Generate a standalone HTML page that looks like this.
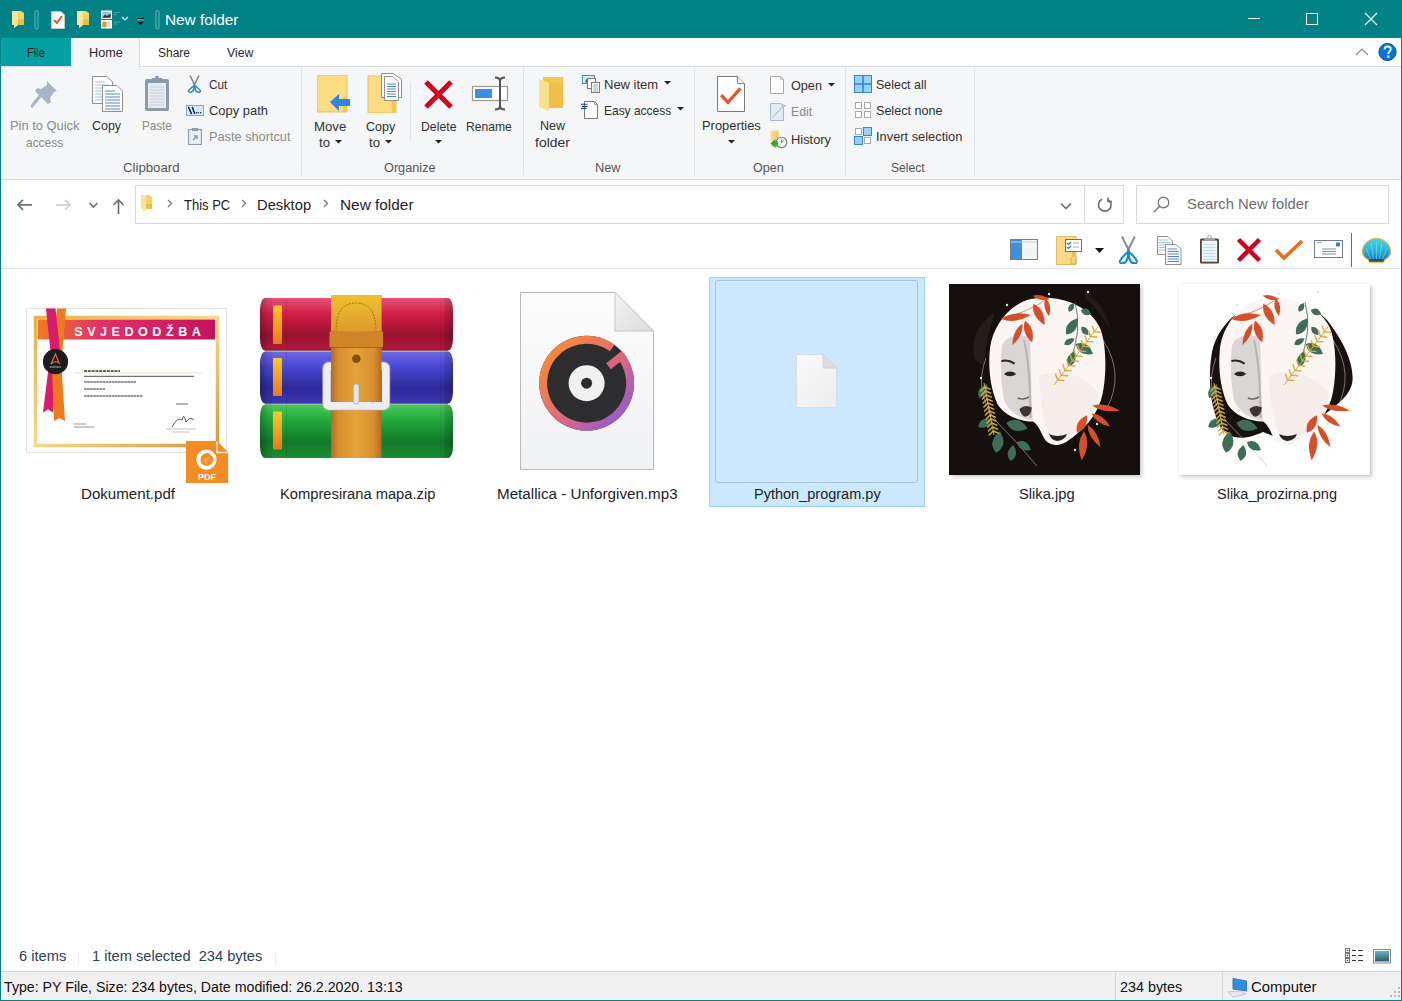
<!DOCTYPE html>
<html><head><meta charset="utf-8"><title>New folder</title>
<style>
html,body{margin:0;padding:0;}
body{width:1402px;height:1001px;position:relative;overflow:hidden;background:#fff;font-family:"Liberation Sans",sans-serif;}
.t{position:absolute;white-space:nowrap;line-height:1;}
svg{display:block;}
</style></head><body>
<div style="position:absolute;left:0px;top:0px;width:1402px;height:38px;background:#038286"></div>
<div style="position:absolute;left:0px;top:0px;width:1px;height:1001px;background:#038286"></div>
<div style="position:absolute;left:1401px;top:0px;width:1px;height:1001px;background:#038286"></div>
<div style="position:absolute;left:0px;top:1000px;width:1402px;height:1px;background:#038286"></div>
<svg style="position:absolute;left:12px;top:11px" width="13" height="17" viewBox="0 0 13 17"><path d="M0 0H9L12 2V14H6L2 17V14H0Z" fill="#f5d36a"/><path d="M0 0H6V14L2 17V14H0Z" fill="#fbe49a"/><path d="M6 8H12V14H6Z" fill="#eabf45"/></svg>
<svg style="position:absolute;left:34px;top:10px" width="5" height="20" viewBox="0 0 5 20"><rect x="1" y="0.5" width="3" height="18.5" rx="1.5" fill="none" stroke="#7cc4c8" stroke-width="0.8"/></svg>
<svg style="position:absolute;left:51px;top:11px" width="14" height="18" viewBox="0 0 14 18"><path d="M0.5 0.5H10L13.5 4V17.5H0.5Z" fill="#fff" stroke="#c8c8c8"/><path d="M3 9L6 12L11 5" stroke="#e05a28" stroke-width="2" fill="none"/></svg>
<svg style="position:absolute;left:77px;top:11px" width="13" height="18" viewBox="0 0 13 18"><path d="M0 0H9L12 2V14H6L2 17V14H0Z" fill="#f5d36a"/><path d="M0 0H6V14L2 17V14H0Z" fill="#fbe49a"/><path d="M6 8H12V14H6Z" fill="#eabf45"/></svg>
<svg style="position:absolute;left:100px;top:10px" width="22" height="20" viewBox="0 0 22 20"><rect x="1" y="0.5" width="11" height="8.5" fill="#fff"/><rect x="2.3" y="1.8" width="8.4" height="5.9" fill="#9cc0e0"/><path d="M2.3 7.7L5 4.5L7 6L10.7 3.5V7.7Z" fill="#2e3a40"/><rect x="1" y="10" width="11" height="8.5" fill="#fff"/><rect x="2.3" y="11.3" width="8.4" height="5.9" fill="#e8e0c8"/><rect x="2.3" y="11.8" width="4" height="5.4" fill="#c8a040"/><path d="M13.5 2.5H20M13.5 4.5H17M13.5 12H20M13.5 14H17" stroke="#5aa8ac" stroke-width="0.8"/></svg>
<svg style="position:absolute;left:121px;top:16px" width="8" height="6" viewBox="0 0 8 6"><path d="M1 1L4 4L7 1" stroke="#d8f4f6" fill="none" stroke-width="1.2"/></svg>
<svg style="position:absolute;left:136px;top:17px" width="9" height="9" viewBox="0 0 9 9"><rect x="1" y="1" width="7" height="1.4" fill="#111"/><path d="M1 2.6H8" stroke="#7fd0d4" stroke-width="0.8"/><path d="M1.5 5H7.5L4.5 8Z" fill="#111"/></svg>
<svg style="position:absolute;left:155px;top:10px" width="5" height="20" viewBox="0 0 5 20"><rect x="1" y="0.5" width="3" height="18.5" rx="1.5" fill="none" stroke="#7cc4c8" stroke-width="0.8"/></svg>
<div class="t" style="left:165.40px;top:12.72px;font-size:14.5px;color:#ffffff;transform:scaleX(1.0576);transform-origin:0 0;">New folder</div>
<div style="position:absolute;left:1248px;top:18px;width:12px;height:1px;background:#fff"></div>
<div style="position:absolute;left:1306px;top:13px;width:12px;height:12px;border:1px solid #fff;box-sizing:border-box"></div>
<svg style="position:absolute;left:1364px;top:12px" width="14" height="14" viewBox="0 0 14 14"><path d="M1 1L13 13M13 1L1 13" stroke="#fff" stroke-width="1.1"/></svg>
<div style="position:absolute;left:1px;top:38px;width:1400px;height:28px;background:#fff"></div>
<div style="position:absolute;left:1px;top:66px;width:1400px;height:1px;background:#dadbdc"></div>
<div style="position:absolute;left:1px;top:38px;width:70px;height:28px;background:#04a0a4"></div>
<div class="t" style="left:26.60px;top:46.64px;font-size:12px;color:#1a1a1a;transform:scaleX(0.9213);transform-origin:0 0;">File</div>
<div style="position:absolute;left:71px;top:38px;width:69px;height:29px;background:#f5f6f7;border-right:1px solid #dadbdc;box-sizing:border-box"></div>
<div class="t" style="left:88.60px;top:46.64px;font-size:12px;color:#2a2a2a;transform:scaleX(1.0549);transform-origin:0 0;">Home</div>
<div class="t" style="left:158.40px;top:46.64px;font-size:12px;color:#2a2a2a;transform:scaleX(0.9988);transform-origin:0 0;">Share</div>
<div class="t" style="left:226.60px;top:46.64px;font-size:12px;color:#2a2a2a;transform:scaleX(1.0233);transform-origin:0 0;">View</div>
<svg style="position:absolute;left:1355px;top:47px" width="14" height="9" viewBox="0 0 14 9"><path d="M1 8L7 2L13 8" stroke="#8a8a8a" fill="none" stroke-width="1.2"/></svg>
<svg style="position:absolute;left:1378px;top:42px" width="19" height="20" viewBox="0 0 19 20"><circle cx="9.5" cy="10" r="8.6" fill="#0a72d4" stroke="#0b4d92" stroke-width="1"/><path d="M6.6 7.4C6.6 5.4 8 4.4 9.7 4.4C11.5 4.4 12.8 5.5 12.8 7.1C12.8 9.4 10.2 9.6 10.2 12" stroke="#d8f2ff" stroke-width="2" fill="none"/><rect x="9" y="13.4" width="2.4" height="2.4" fill="#d8f2ff"/></svg>
<div style="position:absolute;left:1px;top:67px;width:1400px;height:112px;background:#f5f6f7"></div>
<div style="position:absolute;left:1px;top:179px;width:1400px;height:1px;background:#dadbdc"></div>
<div style="position:absolute;left:301px;top:68px;width:1px;height:107px;background:#e2e3e4"></div>
<div style="position:absolute;left:523px;top:68px;width:1px;height:107px;background:#e2e3e4"></div>
<div style="position:absolute;left:694px;top:68px;width:1px;height:107px;background:#e2e3e4"></div>
<div style="position:absolute;left:845px;top:68px;width:1px;height:107px;background:#e2e3e4"></div>
<div style="position:absolute;left:974px;top:68px;width:1px;height:107px;background:#e2e3e4"></div>
<div style="position:absolute;left:410px;top:82px;width:1px;height:58px;background:#e2e3e4"></div>
<div class="t" style="left:122.90px;top:161.93px;font-size:12.6px;color:#555;transform:scaleX(1.0477);transform-origin:0 0;">Clipboard</div>
<div class="t" style="left:384.40px;top:161.73px;font-size:12.6px;color:#555;transform:scaleX(1.0087);transform-origin:0 0;">Organize</div>
<div class="t" style="left:594.50px;top:161.73px;font-size:12.6px;color:#555;transform:scaleX(1.0094);transform-origin:0 0;">New</div>
<div class="t" style="left:752.80px;top:162.03px;font-size:12.6px;color:#555;transform:scaleX(0.9998);transform-origin:0 0;">Open</div>
<div class="t" style="left:891.40px;top:162.03px;font-size:12.6px;color:#555;transform:scaleX(0.9592);transform-origin:0 0;">Select</div>
<svg style="position:absolute;left:31px;top:80px" width="27" height="28" viewBox="0 0 27 28"><path d="M16 1L26 11L23 12L19 18L20 22L17 24L4 11L6 8L10 9L16 5Z" fill="#a8b3c3" transform="translate(0,0)"/><path d="M9 16L1 26" stroke="#a8b3c3" stroke-width="3" stroke-linecap="round"/></svg>
<div class="t" style="left:10.20px;top:120.13px;font-size:12.6px;color:#8a8a8a;transform:scaleX(1.0224);transform-origin:0 0;">Pin to Quick</div>
<div class="t" style="left:25.50px;top:136.83px;font-size:12.6px;color:#8a8a8a;transform:scaleX(0.9468);transform-origin:0 0;">access</div>
<svg style="position:absolute;left:92px;top:76px" width="31" height="36" viewBox="0 0 31 36"><path d="M0.5 0.5H15L20.5 6V27.5H0.5Z" fill="#fff" stroke="#8f8f8f"/><path d="M3 6H13M3 9H17M3 12H17M3 15H17M3 18H17M3 21H17M3 24H17" stroke="#9cc0e6"/><path d="M10.5 9.5H25L30.5 15V35.5H10.5Z" fill="#fff" stroke="#8f8f8f"/><path d="M13 15H23M13 18H28M13 21H28M13 24H28M13 27H28M13 30H28M13 33H28" stroke="#4a86d0"/></svg>
<div class="t" style="left:92.00px;top:120.13px;font-size:12.6px;color:#303030;transform:scaleX(0.9891);transform-origin:0 0;">Copy</div>
<svg style="position:absolute;left:144px;top:75px" width="26" height="37" viewBox="0 0 26 37"><rect x="1" y="4" width="24" height="32" rx="2" fill="#8d99ad"/><rect x="4" y="8" width="18" height="25" fill="#e6ebf3"/><path d="M6 12H20M6 15H20M6 18H20M6 21H20M6 24H20M6 27H20M6 30H20" stroke="#c5cedc"/><rect x="8" y="3" width="10" height="4" fill="#8d99ad"/><circle cx="13" cy="2.5" r="2" fill="#8d99ad"/></svg>
<div class="t" style="left:141.50px;top:119.83px;font-size:12.6px;color:#8a8a8a;transform:scaleX(0.9257);transform-origin:0 0;">Paste</div>
<svg style="position:absolute;left:187px;top:75px" width="15" height="18" viewBox="0 0 15 18"><path d="M3 0.5L8 10.5M12 0.5L7 10.5" stroke="#7d7d7d" stroke-width="1.5"/><path d="M7.5 10.5C5 12.5 1.2 14.8 1.6 16.3C2 17.6 4.6 17.6 5.9 16C6.9 14.8 7.5 12.5 7.5 10.5Z" fill="none" stroke="#2a8ad0" stroke-width="1.6"/><path d="M7.5 10.5C10 12.5 13.8 14.8 13.4 16.3C13 17.6 10.4 17.6 9.1 16C8.1 14.8 7.5 12.5 7.5 10.5Z" fill="none" stroke="#2a8ad0" stroke-width="1.6"/></svg>
<div class="t" style="left:208.50px;top:79.13px;font-size:12.6px;color:#303030;transform:scaleX(0.9289);transform-origin:0 0;">Cut</div>
<svg style="position:absolute;left:186px;top:105px" width="18" height="11" viewBox="0 0 18 11"><rect x="0.5" y="0.5" width="17" height="10" fill="#d3e9fb" stroke="#8ea4ba"/><path d="M2.6 2.4L5.4 8.6M6.4 2.4L8.6 8.4" stroke="#0e1c2c" stroke-width="1.4" stroke-linecap="round"/><circle cx="10.4" cy="7.8" r="0.7" fill="#0e1c2c"/><circle cx="12.4" cy="7.8" r="0.7" fill="#0e1c2c"/><circle cx="14.6" cy="7.8" r="0.7" fill="#0e1c2c"/></svg>
<div class="t" style="left:208.50px;top:104.93px;font-size:12.6px;color:#303030;transform:scaleX(1.0269);transform-origin:0 0;">Copy path</div>
<svg style="position:absolute;left:188px;top:127px" width="14" height="18" viewBox="0 0 14 18"><rect x="0.5" y="2.5" width="13" height="15" fill="#e8edf4" stroke="#8d99ad" stroke-width="1.2"/><rect x="4" y="1" width="6" height="3" fill="#8d99ad"/><path d="M5 13L9 9M6 9H9V12" stroke="#8d99ad" stroke-width="1.5" fill="none"/></svg>
<div class="t" style="left:208.50px;top:130.93px;font-size:12.6px;color:#8a8a8a;transform:scaleX(1.0122);transform-origin:0 0;">Paste shortcut</div>
<svg style="position:absolute;left:317px;top:75px" width="34" height="38" viewBox="0 0 34 38"><path d="M0 0H30V37H0Z" fill="#fbdc82"/><path d="M0 0H30V37H0Z" fill="none" stroke="#e8c25a" stroke-width="1"/><path d="M26 22V37H30V22Z" fill="#f0c850"/><path d="M13 27L22 19V24H33V31H22V36Z" fill="#2e87dc"/></svg>
<div class="t" style="left:314.40px;top:120.63px;font-size:12.6px;color:#303030;transform:scaleX(1.0485);transform-origin:0 0;">Move</div>
<div class="t" style="left:319.30px;top:137.03px;font-size:12.6px;color:#303030;transform:scaleX(1.0455);transform-origin:0 0;">to</div>
<svg style="position:absolute;left:334.5px;top:140.0px" width="7" height="4" viewBox="0 0 7 4"><path d="M0 0H7L3.5 3.5Z" fill="#222"/></svg>
<svg style="position:absolute;left:367px;top:73px" width="35" height="40" viewBox="0 0 35 40"><path d="M1 3H29V40H1Z" fill="#fbdc82" stroke="#e8c25a"/><path d="M25 24V40H29V24Z" fill="#f0c850"/><path d="M14.5 0.5H26L34.5 6V24.5H14.5Z" fill="#fff" stroke="#8f8f8f"/><path d="M17.5 3.5H26L31.5 9V27.5H17.5Z" fill="#fff" stroke="#8f8f8f"/><path d="M20 11H29M20 13.5H29M20 16H29M20 18.5H29M20 21H29M20 23.5H29" stroke="#4a86d0"/></svg>
<div class="t" style="left:365.60px;top:120.63px;font-size:12.6px;color:#303030;transform:scaleX(0.9925);transform-origin:0 0;">Copy</div>
<div class="t" style="left:369.20px;top:137.03px;font-size:12.6px;color:#303030;transform:scaleX(1.0550);transform-origin:0 0;">to</div>
<svg style="position:absolute;left:384.5px;top:140.0px" width="7" height="4" viewBox="0 0 7 4"><path d="M0 0H7L3.5 3.5Z" fill="#222"/></svg>
<svg style="position:absolute;left:423px;top:79px" width="31" height="31" viewBox="0 0 31 31"><path d="M3 3L28 28M28 3L3 28" stroke="#d6001c" stroke-width="5"/></svg>
<div class="t" style="left:420.50px;top:120.63px;font-size:12.6px;color:#303030;transform:scaleX(0.9749);transform-origin:0 0;">Delete</div>
<svg style="position:absolute;left:434.5px;top:140.0px" width="7" height="4" viewBox="0 0 7 4"><path d="M0 0H7L3.5 3.5Z" fill="#222"/></svg>
<svg style="position:absolute;left:471px;top:76px" width="38" height="35" viewBox="0 0 38 35"><rect x="1.5" y="10.5" width="35" height="14" fill="#fff" stroke="#9a9a9a" stroke-width="1.2"/><rect x="4" y="13" width="17" height="9" fill="#3a8fe0"/><path d="M24 1.5Q29 1.5 29 5V30Q29 33.5 24 33.5M34 1.5Q29 1.5 29 5V30Q29 33.5 34 33.5" stroke="#555" stroke-width="2" fill="none"/></svg>
<div class="t" style="left:466.40px;top:120.63px;font-size:12.6px;color:#303030;transform:scaleX(0.9637);transform-origin:0 0;">Rename</div>
<svg style="position:absolute;left:539px;top:77px" width="25" height="35" viewBox="0 0 25 35"><path d="M4 0H24V31H4Z" fill="#f2c84b"/><path d="M0 2L10 6V34L0 30Z" fill="#fbe08c"/><path d="M10 6H24V31H10Z" fill="#eec04a"/></svg>
<div class="t" style="left:539.60px;top:120.13px;font-size:12.6px;color:#303030;transform:scaleX(0.9935);transform-origin:0 0;">New</div>
<div class="t" style="left:535.00px;top:136.93px;font-size:12.6px;color:#303030;transform:scaleX(1.1079);transform-origin:0 0;">folder</div>
<svg style="position:absolute;left:581px;top:74px" width="20" height="20" viewBox="0 0 20 20"><rect x="1.5" y="1.5" width="12" height="8" fill="#d0ecf8" stroke="#5a8a90"/><path d="M4 8.5L5.5 4.5L7 8.5" fill="#3a5a60"/><rect x="6.5" y="4.5" width="8" height="10" fill="#fff" stroke="#777"/><rect x="10.5" y="8.5" width="8" height="10" fill="#fff" stroke="#8a7a7a"/><path d="M12 11H17M12 13H17M12 15H17M12 17H17" stroke="#9aa0b0" stroke-width="0.9"/></svg>
<div class="t" style="left:604.30px;top:78.73px;font-size:12.6px;color:#303030;transform:scaleX(1.0316);transform-origin:0 0;">New item</div>
<svg style="position:absolute;left:663.5px;top:81.0px" width="7" height="4" viewBox="0 0 7 4"><path d="M0 0H7L3.5 3.5Z" fill="#222"/></svg>
<svg style="position:absolute;left:580px;top:101px" width="19" height="19" viewBox="0 0 19 19"><path d="M4.5 0.5H14.5L17.5 3.5V17.5H4.5Z" fill="#fff" stroke="#777"/><path d="M14.5 0.5V3.5H17.5" fill="none" stroke="#999"/><path d="M1 3.3H7.5M2 5.4H7.5M1 7.4H6.5" stroke="#2c4a80" stroke-width="1.1"/></svg>
<div class="t" style="left:604.30px;top:104.83px;font-size:12.6px;color:#303030;transform:scaleX(0.9498);transform-origin:0 0;">Easy access</div>
<svg style="position:absolute;left:676.5px;top:107.0px" width="7" height="4" viewBox="0 0 7 4"><path d="M0 0H7L3.5 3.5Z" fill="#222"/></svg>
<svg style="position:absolute;left:717px;top:76px" width="28" height="36" viewBox="0 0 28 36"><path d="M0.5 0.5H20.5L27.5 7.5V35.5H0.5Z" fill="#fff" stroke="#7a7a7a"/><path d="M20.5 0.5V7.5H27.5" fill="#eef2f4" stroke="#8a8a8a"/><path d="M4.2 19.2L11 26.4L23.4 12.4" stroke="#e05a28" stroke-width="3.2" fill="none"/></svg>
<div class="t" style="left:701.50px;top:120.03px;font-size:12.6px;color:#303030;transform:scaleX(1.0234);transform-origin:0 0;">Properties</div>
<svg style="position:absolute;left:727.5px;top:140.0px" width="7" height="4" viewBox="0 0 7 4"><path d="M0 0H7L3.5 3.5Z" fill="#222"/></svg>
<svg style="position:absolute;left:769px;top:76px" width="16" height="18" viewBox="0 0 16 18"><path d="M1.5 0.5H11.5L14.5 3.5V17.5H1.5Z" fill="#fff" stroke="#a8a8a8"/><path d="M11.5 0.5V3.5H14.5" fill="none" stroke="#bbb"/></svg>
<div class="t" style="left:790.60px;top:79.73px;font-size:12.6px;color:#303030;transform:scaleX(1.0030);transform-origin:0 0;">Open</div>
<svg style="position:absolute;left:827.5px;top:83.0px" width="7" height="4" viewBox="0 0 7 4"><path d="M0 0H7L3.5 3.5Z" fill="#222"/></svg>
<svg style="position:absolute;left:769px;top:103px" width="18" height="18" viewBox="0 0 18 18"><path d="M1.5 0.5H11.5L14.5 3.5V17.5H1.5Z" fill="#e4ecf6" stroke="#a8b6c8"/><path d="M11.5 0.5L17 3L12 4" fill="none" stroke="#b8c4d4"/><path d="M3.5 14.5L14 3.5" stroke="#c0cad8" stroke-width="1.4"/></svg>
<div class="t" style="left:790.60px;top:106.43px;font-size:12.6px;color:#8a8a8a;transform:scaleX(0.9754);transform-origin:0 0;">Edit</div>
<svg style="position:absolute;left:770px;top:130px" width="18" height="19" viewBox="0 0 18 19"><defs><linearGradient id="hf" x1="0" x2="1"><stop offset="0" stop-color="#fce3a0"/><stop offset="1" stop-color="#f2c850"/></linearGradient></defs><path d="M0.5 0.5H8.5V17H0.5Z" fill="url(#hf)"/><circle cx="11.5" cy="12.5" r="5.3" fill="#f4f4f4" stroke="#808080" stroke-width="1.1"/><path d="M11.5 9.5V12.5L13.5 10.5" stroke="#555" stroke-width="0.8" fill="none"/><path d="M0.5 13.5L5.5 9V11.5H8V15.5H5.5V18Z" fill="#2aa838"/></svg>
<div class="t" style="left:790.60px;top:133.73px;font-size:12.6px;color:#303030;transform:scaleX(1.0208);transform-origin:0 0;">History</div>
<svg style="position:absolute;left:854px;top:75px" width="18" height="18" viewBox="0 0 18 18"><rect x="0.5" y="0.5" width="17" height="17" fill="#9cd0f7" stroke="#2f86d6"/><path d="M9 0V18M0 9H18" stroke="#2f86d6" stroke-width="1.6"/></svg>
<div class="t" style="left:876.30px;top:78.93px;font-size:12.6px;color:#303030;transform:scaleX(0.9872);transform-origin:0 0;">Select all</div>
<svg style="position:absolute;left:854px;top:102px" width="18" height="17" viewBox="0 0 18 17"><rect x="1.5" y="0.5" width="6" height="6" fill="#fff" stroke="#a8a8a8"/><rect x="10.5" y="0.5" width="6" height="6" fill="#fff" stroke="#a8a8a8"/><rect x="1.5" y="9.5" width="6" height="6" fill="#fff" stroke="#a8a8a8"/><rect x="10.5" y="9.5" width="6" height="6" fill="#fff" stroke="#a8a8a8"/></svg>
<div class="t" style="left:876.30px;top:105.03px;font-size:12.6px;color:#303030;transform:scaleX(0.9981);transform-origin:0 0;">Select none</div>
<svg style="position:absolute;left:854px;top:127px" width="18" height="18" viewBox="0 0 18 18"><rect x="1.5" y="1.5" width="6" height="6" fill="#fff" stroke="#a8a8a8"/><rect x="9.5" y="0.5" width="8" height="8" fill="#9cd0f7" stroke="#2f86d6"/><rect x="0.5" y="9.5" width="8" height="8" fill="#9cd0f7" stroke="#2f86d6"/><rect x="10.5" y="10.5" width="6" height="6" fill="#fff" stroke="#a8a8a8"/></svg>
<div class="t" style="left:876.30px;top:130.93px;font-size:12.6px;color:#303030;transform:scaleX(1.0196);transform-origin:0 0;">Invert selection</div>
<svg style="position:absolute;left:16px;top:198px" width="17" height="14" viewBox="0 0 17 14"><path d="M2 6.8H16M7 1.8L2 6.8L7 11.8" stroke="#707070" stroke-width="1.7" fill="none"/></svg>
<svg style="position:absolute;left:55px;top:198px" width="17" height="14" viewBox="0 0 17 14"><path d="M15 6.8H1M10 1.8L15 6.8L10 11.8" stroke="#d0d0d0" stroke-width="1.7" fill="none"/></svg>
<svg style="position:absolute;left:88px;top:201px" width="11" height="8" viewBox="0 0 11 8"><path d="M1.5 2L5.5 6L9.5 2" stroke="#707070" stroke-width="1.6" fill="none"/></svg>
<svg style="position:absolute;left:111px;top:197px" width="15" height="18" viewBox="0 0 15 18"><path d="M7.5 17V3M2.5 8L7.5 3L12.5 8" stroke="#707070" stroke-width="1.7" fill="none"/></svg>
<div style="position:absolute;left:135px;top:185px;width:989px;height:39px;border:1px solid #d9d9d9;box-sizing:border-box;background:#fff"></div>
<div style="position:absolute;left:1084px;top:186px;width:1px;height:37px;background:#d9d9d9"></div>
<svg style="position:absolute;left:141px;top:195px" width="12" height="17" viewBox="0 0 12 17"><path d="M0 0H8L11 1.5V14H5L2 17V14H0Z" fill="#f5d36a"/><path d="M0 0H5V14L2 17V14H0Z" fill="#fbe49a"/><path d="M5 9H11V14H5Z" fill="#eabf45"/></svg>
<svg style="position:absolute;left:167px;top:199px" width="6" height="9" viewBox="0 0 6 9"><path d="M1 1L4.5 4.5L1 8" stroke="#7a7a7a" stroke-width="1.3" fill="none"/></svg>
<svg style="position:absolute;left:241px;top:199px" width="6" height="9" viewBox="0 0 6 9"><path d="M1 1L4.5 4.5L1 8" stroke="#7a7a7a" stroke-width="1.3" fill="none"/></svg>
<svg style="position:absolute;left:323px;top:199px" width="6" height="9" viewBox="0 0 6 9"><path d="M1 1L4.5 4.5L1 8" stroke="#7a7a7a" stroke-width="1.3" fill="none"/></svg>
<div class="t" style="left:183.60px;top:197.00px;font-size:15px;color:#1e1e1e;transform:scaleX(0.8664);transform-origin:0 0;">This PC</div>
<div class="t" style="left:257.40px;top:197.00px;font-size:15px;color:#1e1e1e;transform:scaleX(0.9827);transform-origin:0 0;">Desktop</div>
<div class="t" style="left:339.60px;top:197.00px;font-size:15px;color:#1e1e1e;transform:scaleX(1.0251);transform-origin:0 0;">New folder</div>
<svg style="position:absolute;left:1060px;top:202px" width="12" height="8" viewBox="0 0 12 8"><path d="M1 1.5L6 6.5L11 1.5" stroke="#6e6e6e" stroke-width="1.6" fill="none"/></svg>
<svg style="position:absolute;left:1097px;top:197px" width="16" height="16" viewBox="0 0 16 16"><path d="M11.5 2.8A6.3 6.3 0 1 1 5 2.2" stroke="#6e6e6e" stroke-width="1.6" fill="none"/><path d="M11 0.5V4.5H15" stroke="#6e6e6e" stroke-width="1.6" fill="none"/></svg>
<div style="position:absolute;left:1136px;top:185px;width:253px;height:39px;border:1px solid #d9d9d9;box-sizing:border-box;background:#fff"></div>
<svg style="position:absolute;left:1153px;top:196px" width="17" height="17" viewBox="0 0 17 17"><circle cx="10.5" cy="6.5" r="5.3" stroke="#6e6e6e" stroke-width="1.2" fill="none"/><path d="M6.7 10.3L0.8 16.2" stroke="#6e6e6e" stroke-width="1.3"/></svg>
<div class="t" style="left:1186.80px;top:197.42px;font-size:14.5px;color:#6d6d6d;transform:scaleX(1.0213);transform-origin:0 0;">Search New folder</div>
<div style="position:absolute;left:1px;top:268px;width:1400px;height:1px;background:#e5e5e5"></div>
<svg style="position:absolute;left:1010px;top:239px" width="28" height="22" viewBox="0 0 28 22"><rect x="0.5" y="0.5" width="27" height="20" fill="#f4f4f4" stroke="#7d7d7d"/><rect x="1" y="1" width="11" height="19" fill="#3f8fe0"/><path d="M1 3H27" stroke="#cfcfcf"/></svg>
<svg style="position:absolute;left:1056px;top:236px" width="27" height="29" viewBox="0 0 27 29"><path d="M0.5 0.5H20V28.5H0.5Z" fill="#fcd98a" stroke="#e2bf60"/><rect x="9.5" y="3.5" width="16" height="12" fill="#fff" stroke="#6e6e6e"/><path d="M11 7L12.5 8.5L15 6M11 11L12.5 12.5L15 10" stroke="#2f7fd6" stroke-width="1.2" fill="none"/><path d="M17 7H23M17 11H23" stroke="#aaa"/><path d="M17 16V20L15 22V28H20V22L18 20V16" fill="#f3d27a" stroke="#d5b050"/></svg>
<svg style="position:absolute;left:1095px;top:248px" width="9" height="5" viewBox="0 0 9 5"><path d="M0 0H9L4.5 5Z" fill="#111"/></svg>
<svg style="position:absolute;left:1118px;top:236px" width="21" height="28" viewBox="0 0 21 28"><path d="M4 0.5L11.2 15M16.8 0.5L9.6 15" stroke="#8c8c8c" stroke-width="2"/><path d="M10.4 15.5C7 18.5 1.5 23 2 26C2.5 28 6 28 8 25.5C9.5 23.5 10.4 19 10.4 15.5Z" fill="none" stroke="#1d87cf" stroke-width="2.2"/><path d="M10.4 15.5C13.8 18.5 19.3 23 18.8 26C18.3 28 14.8 28 12.8 25.5C11.3 23.5 10.4 19 10.4 15.5Z" fill="none" stroke="#1d87cf" stroke-width="2.2"/></svg>
<svg style="position:absolute;left:1157px;top:236px" width="25" height="29" viewBox="0 0 25 29"><path d="M0.5 0.5H11L15.5 5V18.5H0.5Z" fill="#fff" stroke="#8f8f8f"/><path d="M2 4H11M2 6.5H13M2 9H13M2 11.5H13M2 14H13" stroke="#9cc0e6"/><path d="M8.5 8.5H19L24 13V28.5H8.5Z" fill="#fff" stroke="#8f8f8f"/><path d="M10.5 13H20M10.5 15.5H22M10.5 18H22M10.5 20.5H22M10.5 23H22M10.5 25.5H22" stroke="#4a86d0"/></svg>
<svg style="position:absolute;left:1199px;top:235px" width="21" height="29" viewBox="0 0 21 29"><rect x="1" y="3.5" width="19" height="25" rx="1.5" fill="#5c4127"/><rect x="2.8" y="5.5" width="15.4" height="21.2" fill="#eaf4fb"/><path d="M4.5 9.5H16.5M4.5 12.5H16.5M4.5 15.5H16.5M4.5 18.5H16.5M4.5 21.5H16.5M4.5 24.5H16.5" stroke="#bcd3e6" stroke-width="0.8"/><rect x="5" y="3" width="11" height="2.5" rx="1" fill="#a0a0a0"/><circle cx="10.5" cy="2" r="1.8" fill="none" stroke="#a0a0a0" stroke-width="1"/></svg>
<svg style="position:absolute;left:1236px;top:237px" width="26" height="26" viewBox="0 0 26 26"><path d="M2.5 2.5L23.5 23.5M23.5 2.5L2.5 23.5" stroke="#d0021b" stroke-width="4.5"/></svg>
<svg style="position:absolute;left:1274px;top:239px" width="30" height="22" viewBox="0 0 30 22"><path d="M2 11L10 19L28 2" stroke="#f26a1b" stroke-width="3.5" fill="none"/></svg>
<svg style="position:absolute;left:1314px;top:240px" width="29" height="18" viewBox="0 0 29 18"><rect x="0.5" y="0.5" width="28" height="17" fill="#fff" stroke="#6f7f8f"/><rect x="22" y="2.5" width="4" height="4" fill="#3a82d0"/><path d="M8 9H22M8 11.5H22M8 14H22" stroke="#7f8fa0"/><path d="M2.5 2.5H8" stroke="#aaa"/></svg>
<div style="position:absolute;left:1351px;top:233px;width:1px;height:34px;background:#6a6a6a"></div>
<svg style="position:absolute;left:1361px;top:237px" width="31" height="27" viewBox="0 0 31 27"><defs><linearGradient id="sh" x1="0" y1="0" x2="0" y2="1"><stop offset="0" stop-color="#48d6e4"/><stop offset="0.55" stop-color="#2aaed8"/><stop offset="1" stop-color="#1668b0"/></linearGradient></defs><path d="M15.5 1.5C7.5 1.5 1.5 8 1.5 14.5C1.5 18.5 4 21 7 22.5L8.5 25H22.5L24 22.5C27 21 29.5 18.5 29.5 14.5C29.5 8 23.5 1.5 15.5 1.5Z" fill="url(#sh)" stroke="#f0a848" stroke-width="1.2"/><path d="M15.5 5V22M10 6L12.5 22M21 6L18.5 22M5 11L9.5 22M26 11L21.5 22" stroke="#7ae8f0" stroke-width="0.9" opacity="0.6"/><rect x="8.5" y="22" width="14" height="3" fill="#0d5a80"/><path d="M8.5 25.5H22.5" stroke="#f6c040" stroke-width="1.5"/></svg>
<div style="position:absolute;left:709px;top:277px;width:216px;height:230px;background:#cce8ff;border:1px solid #99d1ff;box-sizing:border-box"></div>
<div style="position:absolute;left:715px;top:280px;width:203px;height:203px;border:1px solid #a9c3d9;border-radius:3px;box-sizing:border-box"></div>
<div class="t" style="left:80.50px;top:485.93px;font-size:15.2px;color:#1e1e1e;transform:scaleX(0.9948);transform-origin:0 0;">Dokument.pdf</div>
<div class="t" style="left:279.70px;top:485.93px;font-size:15.2px;color:#1e1e1e;transform:scaleX(0.9688);transform-origin:0 0;">Kompresirana mapa.zip</div>
<div class="t" style="left:497.00px;top:485.93px;font-size:15.2px;color:#1e1e1e;transform:scaleX(1.0000);transform-origin:0 0;">Metallica - Unforgiven.mp3</div>
<div class="t" style="left:753.80px;top:485.93px;font-size:15.2px;color:#1e1e1e;transform:scaleX(0.9554);transform-origin:0 0;">Python_program.py</div>
<div class="t" style="left:1019.10px;top:485.93px;font-size:15.2px;color:#1e1e1e;transform:scaleX(0.9677);transform-origin:0 0;">Slika.jpg</div>
<div class="t" style="left:1217.40px;top:485.93px;font-size:15.2px;color:#1e1e1e;transform:scaleX(0.9537);transform-origin:0 0;">Slika_prozirna.png</div>
<svg style="position:absolute;left:796px;top:354px" width="41" height="54" viewBox="0 0 41 54"><defs><linearGradient id="pg" x1="0" y1="0" x2="1" y2="1"><stop offset="0" stop-color="#fbfbfb"/><stop offset="1" stop-color="#ececec"/></linearGradient></defs><path d="M0.5 0.5H27L40.5 14V53.5H0.5Z" fill="url(#pg)" stroke="#d6dde4"/><path d="M27 0.5V14H40.5Z" fill="#dedede" stroke="#cfd5da"/></svg>
<svg style="position:absolute;left:520px;top:292px" width="134" height="178" viewBox="0 0 134 178"><defs><linearGradient id="mg" x1="0" y1="0" x2="0" y2="1"><stop offset="0" stop-color="#fcfcfc"/><stop offset="1" stop-color="#f1f2f4"/></linearGradient><linearGradient id="rg" x1="0" y1="0" x2="1" y2="1"><stop offset="0.1" stop-color="#f68a36"/><stop offset="0.55" stop-color="#dc6a7e"/><stop offset="0.95" stop-color="#8d59d4"/></linearGradient><linearGradient id="fg" x1="0" y1="0" x2="1" y2="1"><stop offset="0" stop-color="#f4f4f4"/><stop offset="1" stop-color="#dcdcdc"/></linearGradient></defs><path d="M0.5 0.5H95L133.5 39V177.5H0.5Z" fill="url(#mg)" stroke="#b9b9b9"/><path d="M95 0.5V39H133.5Z" fill="url(#fg)" stroke="#c5c5c5"/><circle cx="66.6" cy="91.2" r="47.4" fill="#2d2d2f"/><path d="M100.9 64.4A43.5 43.5 0 1 1 92.2 56.0" stroke="url(#rg)" stroke-width="8" fill="none"/><path d="M88.5 74.2L104.3 61.8" stroke="#d9677c" stroke-width="7.5"/><circle cx="66.6" cy="91.2" r="18" fill="#f0f0f0"/><circle cx="66.6" cy="91.2" r="5.5" fill="#2b2b2b"/></svg>
<svg style="position:absolute;left:26px;top:308px" width="201" height="145" viewBox="0 0 201 145">
<defs>
<linearGradient id="band" x1="0" x2="1"><stop offset="0" stop-color="#f07a22"/><stop offset="0.35" stop-color="#e2306a"/><stop offset="1" stop-color="#c4135e"/></linearGradient>
<linearGradient id="gold" x1="0" y1="0" x2="1" y2="1"><stop offset="0" stop-color="#e9b24a"/><stop offset="0.5" stop-color="#f6d98a"/><stop offset="1" stop-color="#d49a3a"/></linearGradient>
</defs>
<rect x="0.5" y="0.5" width="200" height="144" fill="#fff" stroke="#e3e3e3"/>
<rect x="9.5" y="9.5" width="182" height="128" fill="none" stroke="url(#gold)" stroke-width="3.5"/>
<rect x="12" y="11.5" width="177" height="20" fill="url(#band)"/>
<text x="113.8" y="28" font-family="Liberation Sans" font-weight="bold" font-size="12.6" fill="#fff" text-anchor="middle" letter-spacing="4.5">SVJEDODŽBA</text>
<path d="M31 0.5H40L36 48H27Z" fill="#ee7a1c"/>
<path d="M20 0.5H29.5L34.5 48H25Z" fill="#d81b6a"/>
<path d="M22.5 60H30L27 104.5L22 101.5L17 104.5Z" fill="#d81b6a"/>
<path d="M26 60H35.5L39 113L33.5 110L28 113Z" fill="#ee7a1c"/>

<circle cx="29.5" cy="53.7" r="12.6" fill="#1d1d1d"/>
<path d="M25 56L29.5 46L33 55Q29 52 25 56Z" fill="none" stroke="#e86a4a" stroke-width="1.1"/><path d="M24 59H35" stroke="#ddd" stroke-width="1.2" stroke-dasharray="1 0.4"/>
<path d="M58 63H94" stroke="#333" stroke-width="1.5" stroke-dasharray="3 0.8"/>
<path d="M48 65H176" stroke="#eee2c0" stroke-width="1"/>
<path d="M58 68.3H168" stroke="#222" stroke-width="0.8"/>
<path d="M58 74H110M58 81H79M58 88H117" stroke="#2a2a2a" stroke-width="1.1" stroke-dasharray="2.6 0.5"/>
<path d="M150 96H162" stroke="#555" stroke-width="0.9"/>
<path d="M48 116H60M48 119H68" stroke="#888" stroke-width="0.9"/>
<path d="M146 119Q152 108 156 112Q158 104 160 114Q164 108 168 112" stroke="#445" stroke-width="0.9" fill="none"/>
<path d="M140 121H170M146 124H164" stroke="#aaa" stroke-width="0.7"/>
</svg>
<svg style="position:absolute;left:186px;top:441px" width="42" height="42" viewBox="0 0 42 42">
<path d="M0 0H31L42 11V42H0Z" fill="#f68b22"/>
<path d="M31 0.5V11.5H41.5" fill="none" stroke="#fff4e6" stroke-width="1.4"/>
<circle cx="20.4" cy="18.6" r="10.2" fill="#fff"/>
<path d="M14.5 19.5C14.5 14 19 11 24 12.5C27 13.5 28 16 27.5 19C26.5 23.5 22.5 25.5 18.5 24.5C16 23.5 14.5 22 14.5 19.5Z" fill="#f68b22"/>
<path d="M22 13C26 14 29 17 28 22L30 14Z" fill="#fff"/>
<path d="M17 20Q20 15 24 16Q21 18 20 23Z" fill="#fbb36a"/>
<text x="21" y="38.8" font-family="Liberation Sans" font-weight="bold" font-size="9" fill="#fff" text-anchor="middle">PDF</text>
</svg>
<svg style="position:absolute;left:260px;top:295px" width="193" height="163" viewBox="0 0 193 163">
<defs>
<linearGradient id="rr" x1="0" y1="0" x2="0" y2="1"><stop offset="0" stop-color="#e4527a"/><stop offset="0.3" stop-color="#d41e48"/><stop offset="0.7" stop-color="#9c1232"/><stop offset="1" stop-color="#b4183c"/></linearGradient>
<linearGradient id="bb" x1="0" y1="0" x2="0" y2="1"><stop offset="0" stop-color="#6c6ae4"/><stop offset="0.3" stop-color="#4a46d2"/><stop offset="0.7" stop-color="#2e2a9a"/><stop offset="1" stop-color="#3a36b0"/></linearGradient>
<linearGradient id="gg" x1="0" y1="0" x2="0" y2="1"><stop offset="0" stop-color="#4cca5c"/><stop offset="0.3" stop-color="#22a83c"/><stop offset="0.7" stop-color="#127a2a"/><stop offset="1" stop-color="#1a8c32"/></linearGradient>
<linearGradient id="tab" x1="0" y1="0" x2="0" y2="1"><stop offset="0" stop-color="#fac828"/><stop offset="1" stop-color="#e87a1a"/></linearGradient>
<linearGradient id="belt" x1="0" x2="1"><stop offset="0" stop-color="#b66a20"/><stop offset="0.15" stop-color="#d88f30"/><stop offset="0.5" stop-color="#e4a238"/><stop offset="0.85" stop-color="#d88f30"/><stop offset="1" stop-color="#b66a20"/></linearGradient>
<linearGradient id="beltTop" x1="0" y1="0" x2="0" y2="1"><stop offset="0" stop-color="#f0c030"/><stop offset="1" stop-color="#dc9a2c"/></linearGradient>
<linearGradient id="edge" x1="0" x2="1"><stop offset="0" stop-color="#000" stop-opacity="0.25"/><stop offset="0.06" stop-color="#000" stop-opacity="0"/><stop offset="0.94" stop-color="#000" stop-opacity="0"/><stop offset="1" stop-color="#000" stop-opacity="0.25"/></linearGradient>
</defs>
<rect x="0" y="3" width="193" height="52.5" rx="5" ry="12" fill="url(#rr)"/>
<rect x="0" y="56.5" width="193" height="52" rx="5" ry="12" fill="url(#bb)"/>
<rect x="0" y="109.5" width="193" height="53.5" rx="5" ry="12" fill="url(#gg)"/>
<rect x="0" y="3" width="193" height="52.5" rx="5" ry="12" fill="url(#edge)"/><rect x="0" y="56.5" width="193" height="52" rx="5" ry="12" fill="url(#edge)"/><rect x="0" y="109.5" width="193" height="53.5" rx="5" ry="12" fill="url(#edge)"/><path d="M11 4V162M26.5 4V162M181 4V162M186 4V162" stroke="#000" stroke-opacity="0.12" stroke-width="0.8"/><path d="M5 55.5H188M5 108.8H188" stroke="#000" stroke-opacity="0.3" stroke-width="1.4"/>
<rect x="13" y="10.5" width="9" height="38.5" rx="1" fill="url(#tab)"/>
<rect x="13" y="63" width="9" height="38" rx="1" fill="url(#tab)"/>
<rect x="13" y="116.5" width="9" height="38" rx="1" fill="url(#tab)"/>
<rect x="71" y="0" width="50.5" height="163" fill="url(#belt)"/>
<path d="M71 0H121.5V36H71Z" fill="url(#beltTop)"/>
<path d="M76 36Q76 8 96 8Q116 8 116 36" fill="none" stroke="#b07018" stroke-width="1" stroke-dasharray="2 1.2"/>
<rect x="69.5" y="36.5" width="53.5" height="16" fill="#d08428"/>
<path d="M69.5 52.5H123" stroke="#9a5a18" stroke-width="0.8"/>
<rect x="66.8" y="71" width="59" height="40" rx="2.5" fill="none" stroke="#eeeef2" stroke-width="8"/>
<rect x="62.8" y="67" width="67" height="48" rx="5" fill="none" stroke="#b8b8c2" stroke-width="0.7"/>
<path d="M71 53H121.5V100Q121.5 104 117.5 104H75Q71 104 71 100Z" fill="url(#belt)"/>
<circle cx="96.3" cy="63.8" r="4.3" fill="#8a4a14"/>
<rect x="93.3" y="89" width="5.7" height="20" rx="2.5" fill="#e4e4ea" stroke="#9a9aa4" stroke-width="0.6"/>
</svg>
<div style="position:absolute;left:949px;top:284px;width:191px;height:191px;background:#150f0d;box-shadow:2px 2px 4px rgba(0,0,0,0.2)"></div>
<svg style="position:absolute;left:949px;top:284px" width="191" height="191" viewBox="20 20 955 955"><path d="M150 400Q110 260 250 160Q200 300 195 430Z" fill="#2b2320" opacity="0.7"/><path d="M700 60Q800 120 830 260Q790 170 700 90Z" fill="#2b2320" opacity="0.6"/><path d="M205 390Q140 560 260 710Q360 810 460 930" stroke="#bdb6b2" stroke-width="3" fill="none"/><path d="M790 300Q900 470 810 640" stroke="#bdb6b2" stroke-width="3" fill="none"/><path d="M430 95C560 70 720 120 775 240C815 340 805 520 780 600C750 690 690 750 620 800C580 830 540 835 505 805C480 770 470 725 440 708C370 705 300 680 262 620C225 540 215 430 225 340C240 230 320 120 430 95Z" fill="#fbf6f4"/><path d="M470 480C560 440 690 460 770 570C740 690 650 780 570 815C515 790 480 700 470 480Z" fill="#eed9d5" opacity="0.35"/><path d="M285 330C300 280 360 270 425 285L432 520C430 600 435 660 440 700C380 700 320 660 295 600C280 520 275 420 285 330Z" fill="#d9d6d5"/><path d="M395 300Q425 420 428 690" stroke="#8d8987" stroke-width="10" fill="none" opacity="0.45"/><path d="M282 405Q315 395 348 418" stroke="#2b2422" stroke-width="10" fill="none"/><path d="M294 470Q325 446 357 470Q325 492 294 470Z" fill="#2a2321"/><path d="M364 590Q390 602 420 585" stroke="#6a6462" stroke-width="8" fill="none"/><path d="M372 645Q400 620 434 638Q430 682 400 684Q380 676 372 645Z" fill="#3e3533"/><path d="M520 770Q560 790 610 770Q600 800 560 805Q530 800 520 770Z" fill="#2a2220"/><path d="M-75.0 0Q-11.25 -35.0 75.0 0Q-11.25 35.0 -75.0 0Z" transform="translate(355 185) rotate(-8)" fill="#d5502a"/><path d="M-60.0 0Q-9.0 -30.0 60.0 0Q-9.0 30.0 -60.0 0Z" transform="translate(362 272) rotate(115)" fill="#d5502a"/><path d="M-57.5 0Q-8.625 -38.0 57.5 0Q-8.625 38.0 -57.5 0Z" transform="translate(418 258) rotate(72)" fill="#d5502a"/><path d="M-60.0 0Q-9.0 -40.0 60.0 0Q-9.0 40.0 -60.0 0Z" transform="translate(470 172) rotate(62)" fill="#d5502a"/><path d="M-45.0 0Q-6.75 -28.0 45.0 0Q-6.75 28.0 -45.0 0Z" transform="translate(512 137) rotate(80)" fill="#d5502a"/><path d="M-42.5 0Q-6.375 -22.0 42.5 0Q-6.375 22.0 -42.5 0Z" transform="translate(480 88) rotate(12)" fill="#d5502a"/><path d="M-70.0 0Q-10.5 -30.0 70.0 0Q-10.5 30.0 -70.0 0Z" transform="translate(805 640) rotate(10)" fill="#d5502a"/><path d="M-57.5 0Q-8.625 -30.0 57.5 0Q-8.625 30.0 -57.5 0Z" transform="translate(780 700) rotate(35)" fill="#d5502a"/><path d="M-50.0 0Q-7.5 -40.0 50.0 0Q-7.5 40.0 -50.0 0Z" transform="translate(685 720) rotate(-60)" fill="#d5502a"/><path d="M-72.5 0Q-10.875 -40.0 72.5 0Q-10.875 40.0 -72.5 0Z" transform="translate(690 830) rotate(95)" fill="#d5502a"/><path d="M-65.0 0Q-9.75 -30.0 65.0 0Q-9.75 30.0 -65.0 0Z" transform="translate(745 780) rotate(60)" fill="#d5502a"/><path d="M280 190Q400 170 520 90" stroke="#c8462a" stroke-width="3" fill="none"/><path d="M650 110Q690 250 620 420" stroke="#3a6650" stroke-width="4" fill="none"/><path d="M-25.0 0Q-3.75 -28.0 25.0 0Q-3.75 28.0 -25.0 0Z" transform="translate(632 137) rotate(-60)" fill="#3f6e58"/><path d="M-27.5 0Q-4.125 -32.0 27.5 0Q-4.125 32.0 -27.5 0Z" transform="translate(705 160) rotate(20)" fill="#3f6e58"/><path d="M-50.0 0Q-7.5 -45.0 50.0 0Q-7.5 45.0 -50.0 0Z" transform="translate(635 232) rotate(-55)" fill="#3f6e58"/><path d="M-27.5 0Q-4.125 -30.0 27.5 0Q-4.125 30.0 -27.5 0Z" transform="translate(700 255) rotate(50)" fill="#3f6e58"/><path d="M-30.0 0Q-4.5 -30.0 30.0 0Q-4.5 30.0 -30.0 0Z" transform="translate(622 308) rotate(-30)" fill="#3f6e58"/><path d="M-50.0 0Q-7.5 -48.0 50.0 0Q-7.5 48.0 -50.0 0Z" transform="translate(697 345) rotate(30)" fill="#3f6e58"/><path d="M-40.0 0Q-6.0 -40.0 40.0 0Q-6.0 40.0 -40.0 0Z" transform="translate(632 395) rotate(-70)" fill="#3f6e58"/><path d="M-40.0 0Q-6.0 -40.0 40.0 0Q-6.0 40.0 -40.0 0Z" transform="translate(190 555) rotate(-60)" fill="#3f6e58"/><path d="M-40.0 0Q-6.0 -40.0 40.0 0Q-6.0 40.0 -40.0 0Z" transform="translate(200 715) rotate(-30)" fill="#3f6e58"/><path d="M-55.0 0Q-8.25 -55.0 55.0 0Q-8.25 55.0 -55.0 0Z" transform="translate(360 728) rotate(15)" fill="#3f6e58"/><path d="M-55.0 0Q-8.25 -55.0 55.0 0Q-8.25 55.0 -55.0 0Z" transform="translate(265 810) rotate(-80)" fill="#3f6e58"/><path d="M-40.0 0Q-6.0 -42.0 40.0 0Q-6.0 42.0 -40.0 0Z" transform="translate(335 865) rotate(-80)" fill="#3f6e58"/><path d="M-40.0 0Q-6.0 -42.0 40.0 0Q-6.0 42.0 -40.0 0Z" transform="translate(395 830) rotate(30)" fill="#3f6e58"/><path d="M545 525L765 235" stroke="#d6ac3e" stroke-width="5"/><path d="M563.3 500.8L593.6 502.7" stroke="#d6ac3e" stroke-width="7" stroke-linecap="round"/><path d="M563.3 500.8L553.4 472.2" stroke="#d6ac3e" stroke-width="7" stroke-linecap="round"/><path d="M581.7 476.7L611.9 478.5" stroke="#d6ac3e" stroke-width="7" stroke-linecap="round"/><path d="M581.7 476.7L571.7 448.1" stroke="#d6ac3e" stroke-width="7" stroke-linecap="round"/><path d="M600.0 452.5L630.2 454.3" stroke="#d6ac3e" stroke-width="7" stroke-linecap="round"/><path d="M600.0 452.5L590.1 423.9" stroke="#d6ac3e" stroke-width="7" stroke-linecap="round"/><path d="M618.3 428.3L648.6 430.2" stroke="#d6ac3e" stroke-width="7" stroke-linecap="round"/><path d="M618.3 428.3L608.4 399.7" stroke="#d6ac3e" stroke-width="7" stroke-linecap="round"/><path d="M636.7 404.2L666.9 406.0" stroke="#d6ac3e" stroke-width="7" stroke-linecap="round"/><path d="M636.7 404.2L626.7 375.6" stroke="#d6ac3e" stroke-width="7" stroke-linecap="round"/><path d="M655.0 380.0L685.2 381.8" stroke="#d6ac3e" stroke-width="7" stroke-linecap="round"/><path d="M655.0 380.0L645.1 351.4" stroke="#d6ac3e" stroke-width="7" stroke-linecap="round"/><path d="M673.3 355.8L703.6 357.7" stroke="#d6ac3e" stroke-width="7" stroke-linecap="round"/><path d="M673.3 355.8L663.4 327.2" stroke="#d6ac3e" stroke-width="7" stroke-linecap="round"/><path d="M691.7 331.7L721.9 333.5" stroke="#d6ac3e" stroke-width="7" stroke-linecap="round"/><path d="M691.7 331.7L681.7 303.1" stroke="#d6ac3e" stroke-width="7" stroke-linecap="round"/><path d="M710.0 307.5L740.2 309.3" stroke="#d6ac3e" stroke-width="7" stroke-linecap="round"/><path d="M710.0 307.5L700.1 278.9" stroke="#d6ac3e" stroke-width="7" stroke-linecap="round"/><path d="M728.3 283.3L758.6 285.2" stroke="#d6ac3e" stroke-width="7" stroke-linecap="round"/><path d="M728.3 283.3L718.4 254.7" stroke="#d6ac3e" stroke-width="7" stroke-linecap="round"/><path d="M746.7 259.2L776.9 261.0" stroke="#d6ac3e" stroke-width="7" stroke-linecap="round"/><path d="M746.7 259.2L736.7 230.6" stroke="#d6ac3e" stroke-width="7" stroke-linecap="round"/><path d="M195 515L245 775" stroke="#d6ac3e" stroke-width="5"/><path d="M198.8 535.0L178.8 554.7" stroke="#d6ac3e" stroke-width="7" stroke-linecap="round"/><path d="M198.8 535.0L224.8 545.9" stroke="#d6ac3e" stroke-width="7" stroke-linecap="round"/><path d="M202.7 555.0L182.7 574.7" stroke="#d6ac3e" stroke-width="7" stroke-linecap="round"/><path d="M202.7 555.0L228.6 565.9" stroke="#d6ac3e" stroke-width="7" stroke-linecap="round"/><path d="M206.5 575.0L186.5 594.7" stroke="#d6ac3e" stroke-width="7" stroke-linecap="round"/><path d="M206.5 575.0L232.5 585.9" stroke="#d6ac3e" stroke-width="7" stroke-linecap="round"/><path d="M210.4 595.0L190.4 614.7" stroke="#d6ac3e" stroke-width="7" stroke-linecap="round"/><path d="M210.4 595.0L236.3 605.9" stroke="#d6ac3e" stroke-width="7" stroke-linecap="round"/><path d="M214.2 615.0L194.2 634.7" stroke="#d6ac3e" stroke-width="7" stroke-linecap="round"/><path d="M214.2 615.0L240.2 625.9" stroke="#d6ac3e" stroke-width="7" stroke-linecap="round"/><path d="M218.1 635.0L198.0 654.7" stroke="#d6ac3e" stroke-width="7" stroke-linecap="round"/><path d="M218.1 635.0L244.0 645.9" stroke="#d6ac3e" stroke-width="7" stroke-linecap="round"/><path d="M221.9 655.0L201.9 674.7" stroke="#d6ac3e" stroke-width="7" stroke-linecap="round"/><path d="M221.9 655.0L247.8 665.9" stroke="#d6ac3e" stroke-width="7" stroke-linecap="round"/><path d="M225.8 675.0L205.7 694.7" stroke="#d6ac3e" stroke-width="7" stroke-linecap="round"/><path d="M225.8 675.0L251.7 685.9" stroke="#d6ac3e" stroke-width="7" stroke-linecap="round"/><path d="M229.6 695.0L209.6 714.7" stroke="#d6ac3e" stroke-width="7" stroke-linecap="round"/><path d="M229.6 695.0L255.5 705.9" stroke="#d6ac3e" stroke-width="7" stroke-linecap="round"/><path d="M233.5 715.0L213.4 734.7" stroke="#d6ac3e" stroke-width="7" stroke-linecap="round"/><path d="M233.5 715.0L259.4 725.9" stroke="#d6ac3e" stroke-width="7" stroke-linecap="round"/><path d="M237.3 735.0L217.3 754.7" stroke="#d6ac3e" stroke-width="7" stroke-linecap="round"/><path d="M237.3 735.0L263.2 745.9" stroke="#d6ac3e" stroke-width="7" stroke-linecap="round"/><path d="M241.2 755.0L221.1 774.7" stroke="#d6ac3e" stroke-width="7" stroke-linecap="round"/><path d="M241.2 755.0L267.1 765.9" stroke="#d6ac3e" stroke-width="7" stroke-linecap="round"/><circle cx="520" cy="70" r="6" fill="#e8e4e0"/><circle cx="715" cy="60" r="6" fill="#e8e4e0"/><circle cx="310" cy="125" r="6" fill="#e8e4e0"/><circle cx="180" cy="490" r="6" fill="#e8e4e0"/><circle cx="650" cy="850" r="6" fill="#e8e4e0"/><circle cx="760" cy="720" r="6" fill="#e8e4e0"/></svg>
<div style="position:absolute;left:1179px;top:284px;width:191px;height:191px;background:#fff;box-shadow:0 0 1px rgba(0,0,0,0.15),2px 2px 4px rgba(0,0,0,0.22)"></div>
<svg style="position:absolute;left:1179px;top:284px" width="191" height="191" viewBox="20 20 955 955"><path d="M410 115C300 150 200 250 182 380C165 500 175 640 230 740C270 790 330 810 440 760L520 790L640 760C760 650 880 600 888 500C892 400 830 290 760 200C690 120 560 95 410 115Z" fill="#171210"/><path d="M150 400Q110 260 250 160Q200 300 195 430Z" fill="none"/><path d="M700 60Q800 120 830 260Q790 170 700 90Z" fill="none"/><path d="M205 390Q140 560 260 710Q360 810 460 930" stroke="#bdb6b2" stroke-width="3" fill="none"/><path d="M790 300Q900 470 810 640" stroke="#bdb6b2" stroke-width="3" fill="none"/><path d="M430 95C560 70 720 120 775 240C815 340 805 520 780 600C750 690 690 750 620 800C580 830 540 835 505 805C480 770 470 725 440 708C370 705 300 680 262 620C225 540 215 430 225 340C240 230 320 120 430 95Z" fill="#fbf6f4"/><path d="M470 480C560 440 690 460 770 570C740 690 650 780 570 815C515 790 480 700 470 480Z" fill="#eed9d5" opacity="0.35"/><path d="M285 330C300 280 360 270 425 285L432 520C430 600 435 660 440 700C380 700 320 660 295 600C280 520 275 420 285 330Z" fill="#d9d6d5"/><path d="M395 300Q425 420 428 690" stroke="#8d8987" stroke-width="10" fill="none" opacity="0.45"/><path d="M282 405Q315 395 348 418" stroke="#2b2422" stroke-width="10" fill="none"/><path d="M294 470Q325 446 357 470Q325 492 294 470Z" fill="#2a2321"/><path d="M364 590Q390 602 420 585" stroke="#6a6462" stroke-width="8" fill="none"/><path d="M372 645Q400 620 434 638Q430 682 400 684Q380 676 372 645Z" fill="#3e3533"/><path d="M520 770Q560 790 610 770Q600 800 560 805Q530 800 520 770Z" fill="#2a2220"/><path d="M-75.0 0Q-11.25 -35.0 75.0 0Q-11.25 35.0 -75.0 0Z" transform="translate(355 185) rotate(-8)" fill="#d5502a"/><path d="M-60.0 0Q-9.0 -30.0 60.0 0Q-9.0 30.0 -60.0 0Z" transform="translate(362 272) rotate(115)" fill="#d5502a"/><path d="M-57.5 0Q-8.625 -38.0 57.5 0Q-8.625 38.0 -57.5 0Z" transform="translate(418 258) rotate(72)" fill="#d5502a"/><path d="M-60.0 0Q-9.0 -40.0 60.0 0Q-9.0 40.0 -60.0 0Z" transform="translate(470 172) rotate(62)" fill="#d5502a"/><path d="M-45.0 0Q-6.75 -28.0 45.0 0Q-6.75 28.0 -45.0 0Z" transform="translate(512 137) rotate(80)" fill="#d5502a"/><path d="M-42.5 0Q-6.375 -22.0 42.5 0Q-6.375 22.0 -42.5 0Z" transform="translate(480 88) rotate(12)" fill="#d5502a"/><path d="M-70.0 0Q-10.5 -30.0 70.0 0Q-10.5 30.0 -70.0 0Z" transform="translate(805 640) rotate(10)" fill="#d5502a"/><path d="M-57.5 0Q-8.625 -30.0 57.5 0Q-8.625 30.0 -57.5 0Z" transform="translate(780 700) rotate(35)" fill="#d5502a"/><path d="M-50.0 0Q-7.5 -40.0 50.0 0Q-7.5 40.0 -50.0 0Z" transform="translate(685 720) rotate(-60)" fill="#d5502a"/><path d="M-72.5 0Q-10.875 -40.0 72.5 0Q-10.875 40.0 -72.5 0Z" transform="translate(690 830) rotate(95)" fill="#d5502a"/><path d="M-65.0 0Q-9.75 -30.0 65.0 0Q-9.75 30.0 -65.0 0Z" transform="translate(745 780) rotate(60)" fill="#d5502a"/><path d="M280 190Q400 170 520 90" stroke="#c8462a" stroke-width="3" fill="none"/><path d="M650 110Q690 250 620 420" stroke="#3a6650" stroke-width="4" fill="none"/><path d="M-25.0 0Q-3.75 -28.0 25.0 0Q-3.75 28.0 -25.0 0Z" transform="translate(632 137) rotate(-60)" fill="#3f6e58"/><path d="M-27.5 0Q-4.125 -32.0 27.5 0Q-4.125 32.0 -27.5 0Z" transform="translate(705 160) rotate(20)" fill="#3f6e58"/><path d="M-50.0 0Q-7.5 -45.0 50.0 0Q-7.5 45.0 -50.0 0Z" transform="translate(635 232) rotate(-55)" fill="#3f6e58"/><path d="M-27.5 0Q-4.125 -30.0 27.5 0Q-4.125 30.0 -27.5 0Z" transform="translate(700 255) rotate(50)" fill="#3f6e58"/><path d="M-30.0 0Q-4.5 -30.0 30.0 0Q-4.5 30.0 -30.0 0Z" transform="translate(622 308) rotate(-30)" fill="#3f6e58"/><path d="M-50.0 0Q-7.5 -48.0 50.0 0Q-7.5 48.0 -50.0 0Z" transform="translate(697 345) rotate(30)" fill="#3f6e58"/><path d="M-40.0 0Q-6.0 -40.0 40.0 0Q-6.0 40.0 -40.0 0Z" transform="translate(632 395) rotate(-70)" fill="#3f6e58"/><path d="M-40.0 0Q-6.0 -40.0 40.0 0Q-6.0 40.0 -40.0 0Z" transform="translate(190 555) rotate(-60)" fill="#3f6e58"/><path d="M-40.0 0Q-6.0 -40.0 40.0 0Q-6.0 40.0 -40.0 0Z" transform="translate(200 715) rotate(-30)" fill="#3f6e58"/><path d="M-55.0 0Q-8.25 -55.0 55.0 0Q-8.25 55.0 -55.0 0Z" transform="translate(360 728) rotate(15)" fill="#3f6e58"/><path d="M-55.0 0Q-8.25 -55.0 55.0 0Q-8.25 55.0 -55.0 0Z" transform="translate(265 810) rotate(-80)" fill="#3f6e58"/><path d="M-40.0 0Q-6.0 -42.0 40.0 0Q-6.0 42.0 -40.0 0Z" transform="translate(335 865) rotate(-80)" fill="#3f6e58"/><path d="M-40.0 0Q-6.0 -42.0 40.0 0Q-6.0 42.0 -40.0 0Z" transform="translate(395 830) rotate(30)" fill="#3f6e58"/><path d="M545 525L765 235" stroke="#d6ac3e" stroke-width="5"/><path d="M563.3 500.8L593.6 502.7" stroke="#d6ac3e" stroke-width="7" stroke-linecap="round"/><path d="M563.3 500.8L553.4 472.2" stroke="#d6ac3e" stroke-width="7" stroke-linecap="round"/><path d="M581.7 476.7L611.9 478.5" stroke="#d6ac3e" stroke-width="7" stroke-linecap="round"/><path d="M581.7 476.7L571.7 448.1" stroke="#d6ac3e" stroke-width="7" stroke-linecap="round"/><path d="M600.0 452.5L630.2 454.3" stroke="#d6ac3e" stroke-width="7" stroke-linecap="round"/><path d="M600.0 452.5L590.1 423.9" stroke="#d6ac3e" stroke-width="7" stroke-linecap="round"/><path d="M618.3 428.3L648.6 430.2" stroke="#d6ac3e" stroke-width="7" stroke-linecap="round"/><path d="M618.3 428.3L608.4 399.7" stroke="#d6ac3e" stroke-width="7" stroke-linecap="round"/><path d="M636.7 404.2L666.9 406.0" stroke="#d6ac3e" stroke-width="7" stroke-linecap="round"/><path d="M636.7 404.2L626.7 375.6" stroke="#d6ac3e" stroke-width="7" stroke-linecap="round"/><path d="M655.0 380.0L685.2 381.8" stroke="#d6ac3e" stroke-width="7" stroke-linecap="round"/><path d="M655.0 380.0L645.1 351.4" stroke="#d6ac3e" stroke-width="7" stroke-linecap="round"/><path d="M673.3 355.8L703.6 357.7" stroke="#d6ac3e" stroke-width="7" stroke-linecap="round"/><path d="M673.3 355.8L663.4 327.2" stroke="#d6ac3e" stroke-width="7" stroke-linecap="round"/><path d="M691.7 331.7L721.9 333.5" stroke="#d6ac3e" stroke-width="7" stroke-linecap="round"/><path d="M691.7 331.7L681.7 303.1" stroke="#d6ac3e" stroke-width="7" stroke-linecap="round"/><path d="M710.0 307.5L740.2 309.3" stroke="#d6ac3e" stroke-width="7" stroke-linecap="round"/><path d="M710.0 307.5L700.1 278.9" stroke="#d6ac3e" stroke-width="7" stroke-linecap="round"/><path d="M728.3 283.3L758.6 285.2" stroke="#d6ac3e" stroke-width="7" stroke-linecap="round"/><path d="M728.3 283.3L718.4 254.7" stroke="#d6ac3e" stroke-width="7" stroke-linecap="round"/><path d="M746.7 259.2L776.9 261.0" stroke="#d6ac3e" stroke-width="7" stroke-linecap="round"/><path d="M746.7 259.2L736.7 230.6" stroke="#d6ac3e" stroke-width="7" stroke-linecap="round"/><path d="M195 515L245 775" stroke="#d6ac3e" stroke-width="5"/><path d="M198.8 535.0L178.8 554.7" stroke="#d6ac3e" stroke-width="7" stroke-linecap="round"/><path d="M198.8 535.0L224.8 545.9" stroke="#d6ac3e" stroke-width="7" stroke-linecap="round"/><path d="M202.7 555.0L182.7 574.7" stroke="#d6ac3e" stroke-width="7" stroke-linecap="round"/><path d="M202.7 555.0L228.6 565.9" stroke="#d6ac3e" stroke-width="7" stroke-linecap="round"/><path d="M206.5 575.0L186.5 594.7" stroke="#d6ac3e" stroke-width="7" stroke-linecap="round"/><path d="M206.5 575.0L232.5 585.9" stroke="#d6ac3e" stroke-width="7" stroke-linecap="round"/><path d="M210.4 595.0L190.4 614.7" stroke="#d6ac3e" stroke-width="7" stroke-linecap="round"/><path d="M210.4 595.0L236.3 605.9" stroke="#d6ac3e" stroke-width="7" stroke-linecap="round"/><path d="M214.2 615.0L194.2 634.7" stroke="#d6ac3e" stroke-width="7" stroke-linecap="round"/><path d="M214.2 615.0L240.2 625.9" stroke="#d6ac3e" stroke-width="7" stroke-linecap="round"/><path d="M218.1 635.0L198.0 654.7" stroke="#d6ac3e" stroke-width="7" stroke-linecap="round"/><path d="M218.1 635.0L244.0 645.9" stroke="#d6ac3e" stroke-width="7" stroke-linecap="round"/><path d="M221.9 655.0L201.9 674.7" stroke="#d6ac3e" stroke-width="7" stroke-linecap="round"/><path d="M221.9 655.0L247.8 665.9" stroke="#d6ac3e" stroke-width="7" stroke-linecap="round"/><path d="M225.8 675.0L205.7 694.7" stroke="#d6ac3e" stroke-width="7" stroke-linecap="round"/><path d="M225.8 675.0L251.7 685.9" stroke="#d6ac3e" stroke-width="7" stroke-linecap="round"/><path d="M229.6 695.0L209.6 714.7" stroke="#d6ac3e" stroke-width="7" stroke-linecap="round"/><path d="M229.6 695.0L255.5 705.9" stroke="#d6ac3e" stroke-width="7" stroke-linecap="round"/><path d="M233.5 715.0L213.4 734.7" stroke="#d6ac3e" stroke-width="7" stroke-linecap="round"/><path d="M233.5 715.0L259.4 725.9" stroke="#d6ac3e" stroke-width="7" stroke-linecap="round"/><path d="M237.3 735.0L217.3 754.7" stroke="#d6ac3e" stroke-width="7" stroke-linecap="round"/><path d="M237.3 735.0L263.2 745.9" stroke="#d6ac3e" stroke-width="7" stroke-linecap="round"/><path d="M241.2 755.0L221.1 774.7" stroke="#d6ac3e" stroke-width="7" stroke-linecap="round"/><path d="M241.2 755.0L267.1 765.9" stroke="#d6ac3e" stroke-width="7" stroke-linecap="round"/><circle cx="520" cy="70" r="6" fill="#e8e4e0"/><circle cx="715" cy="60" r="6" fill="#e8e4e0"/><circle cx="310" cy="125" r="6" fill="#e8e4e0"/><circle cx="180" cy="490" r="6" fill="#e8e4e0"/><circle cx="650" cy="850" r="6" fill="#e8e4e0"/><circle cx="760" cy="720" r="6" fill="#e8e4e0"/></svg>
<div class="t" style="left:18.60px;top:949.92px;font-size:13.8px;color:#2c4058;transform:scaleX(1.0628);transform-origin:0 0;">6 items</div>
<div style="position:absolute;left:78px;top:951px;width:1px;height:14px;background:#eeeeee"></div>
<div class="t" style="left:92.30px;top:949.92px;font-size:13.8px;color:#2c4058;transform:scaleX(1.0620);transform-origin:0 0;">1 item selected&nbsp; 234 bytes</div>
<div style="position:absolute;left:275px;top:951px;width:1px;height:14px;background:#eeeeee"></div>
<svg style="position:absolute;left:1345px;top:948px" width="19" height="16" viewBox="0 0 19 16"><rect x="0.5" y="0.5" width="4" height="4" fill="#fff" stroke="#777"/><rect x="0.5" y="5.5" width="4" height="4" fill="#fff" stroke="#777"/><rect x="0.5" y="10.5" width="4" height="4" fill="#fff" stroke="#8a6a4a"/><path d="M7 2.5H11M13 2.5H18M7 7.5H11M13 7.5H18M7 12.5H11M13 12.5H18" stroke="#333" stroke-width="1.2"/><circle cx="2.5" cy="2.5" r="0.8" fill="#333"/><circle cx="2.5" cy="7.5" r="0.8" fill="#333"/><circle cx="2.5" cy="12.5" r="0.8" fill="#333"/></svg>
<svg style="position:absolute;left:1373px;top:949px" width="18" height="15" viewBox="0 0 18 15"><defs><linearGradient id="lg" x1="0" y1="0" x2="0" y2="1"><stop offset="0" stop-color="#6aaee8"/><stop offset="0.5" stop-color="#4d8a7a"/><stop offset="1" stop-color="#2a5a8a"/></linearGradient></defs><rect x="0.5" y="0.5" width="17" height="13.5" fill="#fff" stroke="#888"/><rect x="2" y="2" width="14" height="10.5" fill="url(#lg)"/></svg>
<div style="position:absolute;left:1px;top:971px;width:1400px;height:29px;background:#f0f0f0"></div>
<div style="position:absolute;left:1px;top:971px;width:1400px;height:1px;background:#d7d7d7"></div>
<div style="position:absolute;left:1115px;top:972px;width:1px;height:28px;background:#d7d7d7"></div>
<div style="position:absolute;left:1222px;top:972px;width:1px;height:28px;background:#d7d7d7"></div>
<div class="t" style="left:3.60px;top:978.95px;font-size:15.3px;color:#111;transform:scaleX(0.9270);transform-origin:0 0;">Type: PY File, Size: 234 bytes, Date modified: 26.2.2020. 13:13</div>
<div class="t" style="left:1120.40px;top:978.95px;font-size:15.3px;color:#111;transform:scaleX(0.9378);transform-origin:0 0;">234 bytes</div>
<svg style="position:absolute;left:1228px;top:978px" width="19" height="20" viewBox="0 0 19 20"><path d="M5 0.5L18.5 3V13L5 11Z" fill="#2f8fe0" stroke="#1a6ab0" stroke-width="0.8"/><path d="M0 14L12 13L18 16L5 19Z" fill="#e8e8ee" stroke="#b5b5c0" stroke-width="0.7"/></svg>
<div class="t" style="left:1251.40px;top:978.95px;font-size:15.3px;color:#111;transform:scaleX(0.9737);transform-origin:0 0;">Computer</div>
<div style="position:absolute;left:1398px;top:987px;width:2px;height:2px;background:#b8b8b8"></div>
<div style="position:absolute;left:1394px;top:991px;width:2px;height:2px;background:#b8b8b8"></div>
<div style="position:absolute;left:1398px;top:991px;width:2px;height:2px;background:#b8b8b8"></div>
<div style="position:absolute;left:1390px;top:995px;width:2px;height:2px;background:#b8b8b8"></div>
<div style="position:absolute;left:1394px;top:995px;width:2px;height:2px;background:#b8b8b8"></div>
<div style="position:absolute;left:1398px;top:995px;width:2px;height:2px;background:#b8b8b8"></div>
</body></html>
